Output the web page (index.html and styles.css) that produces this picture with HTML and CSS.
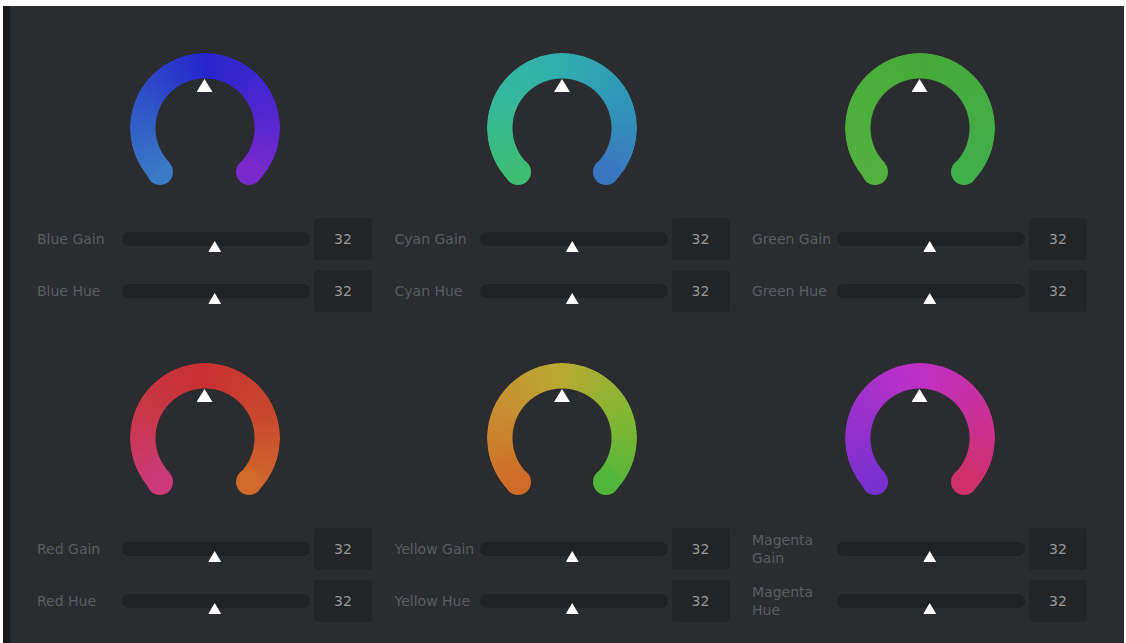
FILE: index.html
```html
<!DOCTYPE html>
<html lang="en">
<head>
<meta charset="utf-8">
<title>Color Correction</title>
<link rel="stylesheet" href="styles.css">
</head>
<body>
<div class="frame">
  <div class="grid">
    <section class="group">
      <div class="dial dial--blue"><div class="ring"></div><span class="dial-mark"></span></div>
      <div class="row"><span class="label">Blue Gain</span><div class="track"><span class="thumb"></span></div><span class="value">32</span></div>
      <div class="row"><span class="label">Blue Hue</span><div class="track"><span class="thumb"></span></div><span class="value">32</span></div>
    </section>
    <section class="group">
      <div class="dial dial--cyan"><div class="ring"></div><span class="dial-mark"></span></div>
      <div class="row"><span class="label">Cyan Gain</span><div class="track"><span class="thumb"></span></div><span class="value">32</span></div>
      <div class="row"><span class="label">Cyan Hue</span><div class="track"><span class="thumb"></span></div><span class="value">32</span></div>
    </section>
    <section class="group">
      <div class="dial dial--green"><div class="ring"></div><span class="dial-mark"></span></div>
      <div class="row"><span class="label">Green Gain</span><div class="track"><span class="thumb"></span></div><span class="value">32</span></div>
      <div class="row"><span class="label">Green Hue</span><div class="track"><span class="thumb"></span></div><span class="value">32</span></div>
    </section>
    <section class="group">
      <div class="dial dial--red"><div class="ring"></div><span class="dial-mark"></span></div>
      <div class="row"><span class="label">Red Gain</span><div class="track"><span class="thumb"></span></div><span class="value">32</span></div>
      <div class="row"><span class="label">Red Hue</span><div class="track"><span class="thumb"></span></div><span class="value">32</span></div>
    </section>
    <section class="group">
      <div class="dial dial--yellow"><div class="ring"></div><span class="dial-mark"></span></div>
      <div class="row"><span class="label">Yellow Gain</span><div class="track"><span class="thumb"></span></div><span class="value">32</span></div>
      <div class="row"><span class="label">Yellow Hue</span><div class="track"><span class="thumb"></span></div><span class="value">32</span></div>
    </section>
    <section class="group">
      <div class="dial dial--magenta"><div class="ring"></div><span class="dial-mark"></span></div>
      <div class="row"><span class="label">Magenta Gain</span><div class="track"><span class="thumb"></span></div><span class="value">32</span></div>
      <div class="row"><span class="label">Magenta Hue</span><div class="track"><span class="thumb"></span></div><span class="value">32</span></div>
    </section>
  </div>
</div>
</body>
</html>
```

FILE: styles.css
```css
html, body {
  margin: 0;
  padding: 0;
  background: #ffffff;
}

body {
  font-family: "DejaVu Sans", "Liberation Sans", sans-serif;
}

.frame {
  box-sizing: border-box;
  margin: 6px 2px 0 3px;
  height: 637px;
  border-left: 7px solid #17191b;
  background: #2a2c2f;
  padding: 47px 0 0 27px;
}

.grid {
  display: grid;
  grid-template-columns: repeat(3, 335px);
  column-gap: 22.5px;
  row-gap: 51px;
}

.group {
  display: flex;
  flex-direction: column;
  gap: 10px;
}

/* ---- colour dial: conic ring with rounded ends ---- */
.dial {
  position: relative;
  width: 150px;
  height: 150px;
  margin: 0 auto 5px;
}

.ring {
  width: 150px;
  height: 150px;
  border-radius: 50%;
  background: conic-gradient(from 225deg,
    var(--c1) 0deg,
    var(--c2) 70deg,
    var(--c3) 135deg,
    var(--c4) 200deg,
    var(--c5) 270deg,
    transparent 270deg);
  -webkit-mask: radial-gradient(circle at center, transparent 49px, #000 50px);
  mask: radial-gradient(circle at center, transparent 49px, #000 50px);
}

.dial::before,
.dial::after {
  content: "";
  position: absolute;
  top: 106.2px;
  width: 26px;
  height: 26px;
  border-radius: 50%;
}

.dial::before {
  left: 17.8px;
  background: var(--c1);
}

.dial::after {
  left: 106.2px;
  background: var(--c5);
}

.dial-mark {
  position: absolute;
  top: 26px;
  left: 50%;
  width: 16px;
  height: 13px;
  transform: translateX(-50%);
  background: #ffffff;
  clip-path: polygon(50% 0, 100% 100%, 0 100%);
}

.dial--blue    { --c1: #3a7ac6; --c2: #2e52c8; --c3: #2626cc; --c4: #4a26d0; --c5: #7a2acc; }
.dial--cyan    { --c1: #3cbd72; --c2: #36b89c; --c3: #30aeae; --c4: #3096b8; --c5: #3a76c0; }
.dial--green   { --c1: #52b040; --c2: #4cae3a; --c3: #46aa3a; --c4: #44ac42; --c5: #40ae4a; }
.dial--red     { --c1: #cc3a7c; --c2: #c83646; --c3: #c83030; --c4: #c8462e; --c5: #d0692a; }
.dial--yellow  { --c1: #d06a28; --c2: #c88e30; --c3: #b8aa32; --c4: #86b632; --c5: #52b63a; }
.dial--magenta { --c1: #7a30d0; --c2: #9a30cc; --c3: #c030c6; --c4: #c8309a; --c5: #d03068; }

/* ---- slider rows ---- */
.row {
  display: flex;
  align-items: center;
  height: 42px;
}

.label {
  flex: 0 0 85px;
  font-size: 14px;
  line-height: 18px;
  color: #5b5e61;
}

.track {
  position: relative;
  flex: 1;
  height: 14px;
  border-radius: 7px;
  background: #1f2123;
}

.thumb {
  position: absolute;
  top: 9px;
  left: 50%;
  width: 13px;
  height: 11px;
  transform: translateX(-60%);
  background: #ffffff;
  clip-path: polygon(50% 0, 100% 100%, 0 100%);
}

.value {
  flex: 0 0 58px;
  height: 42px;
  margin-left: 4px;
  border-radius: 4px;
  background: #222426;
  color: #979899;
  font-size: 14px;
  display: flex;
  align-items: center;
  justify-content: center;
}
```
